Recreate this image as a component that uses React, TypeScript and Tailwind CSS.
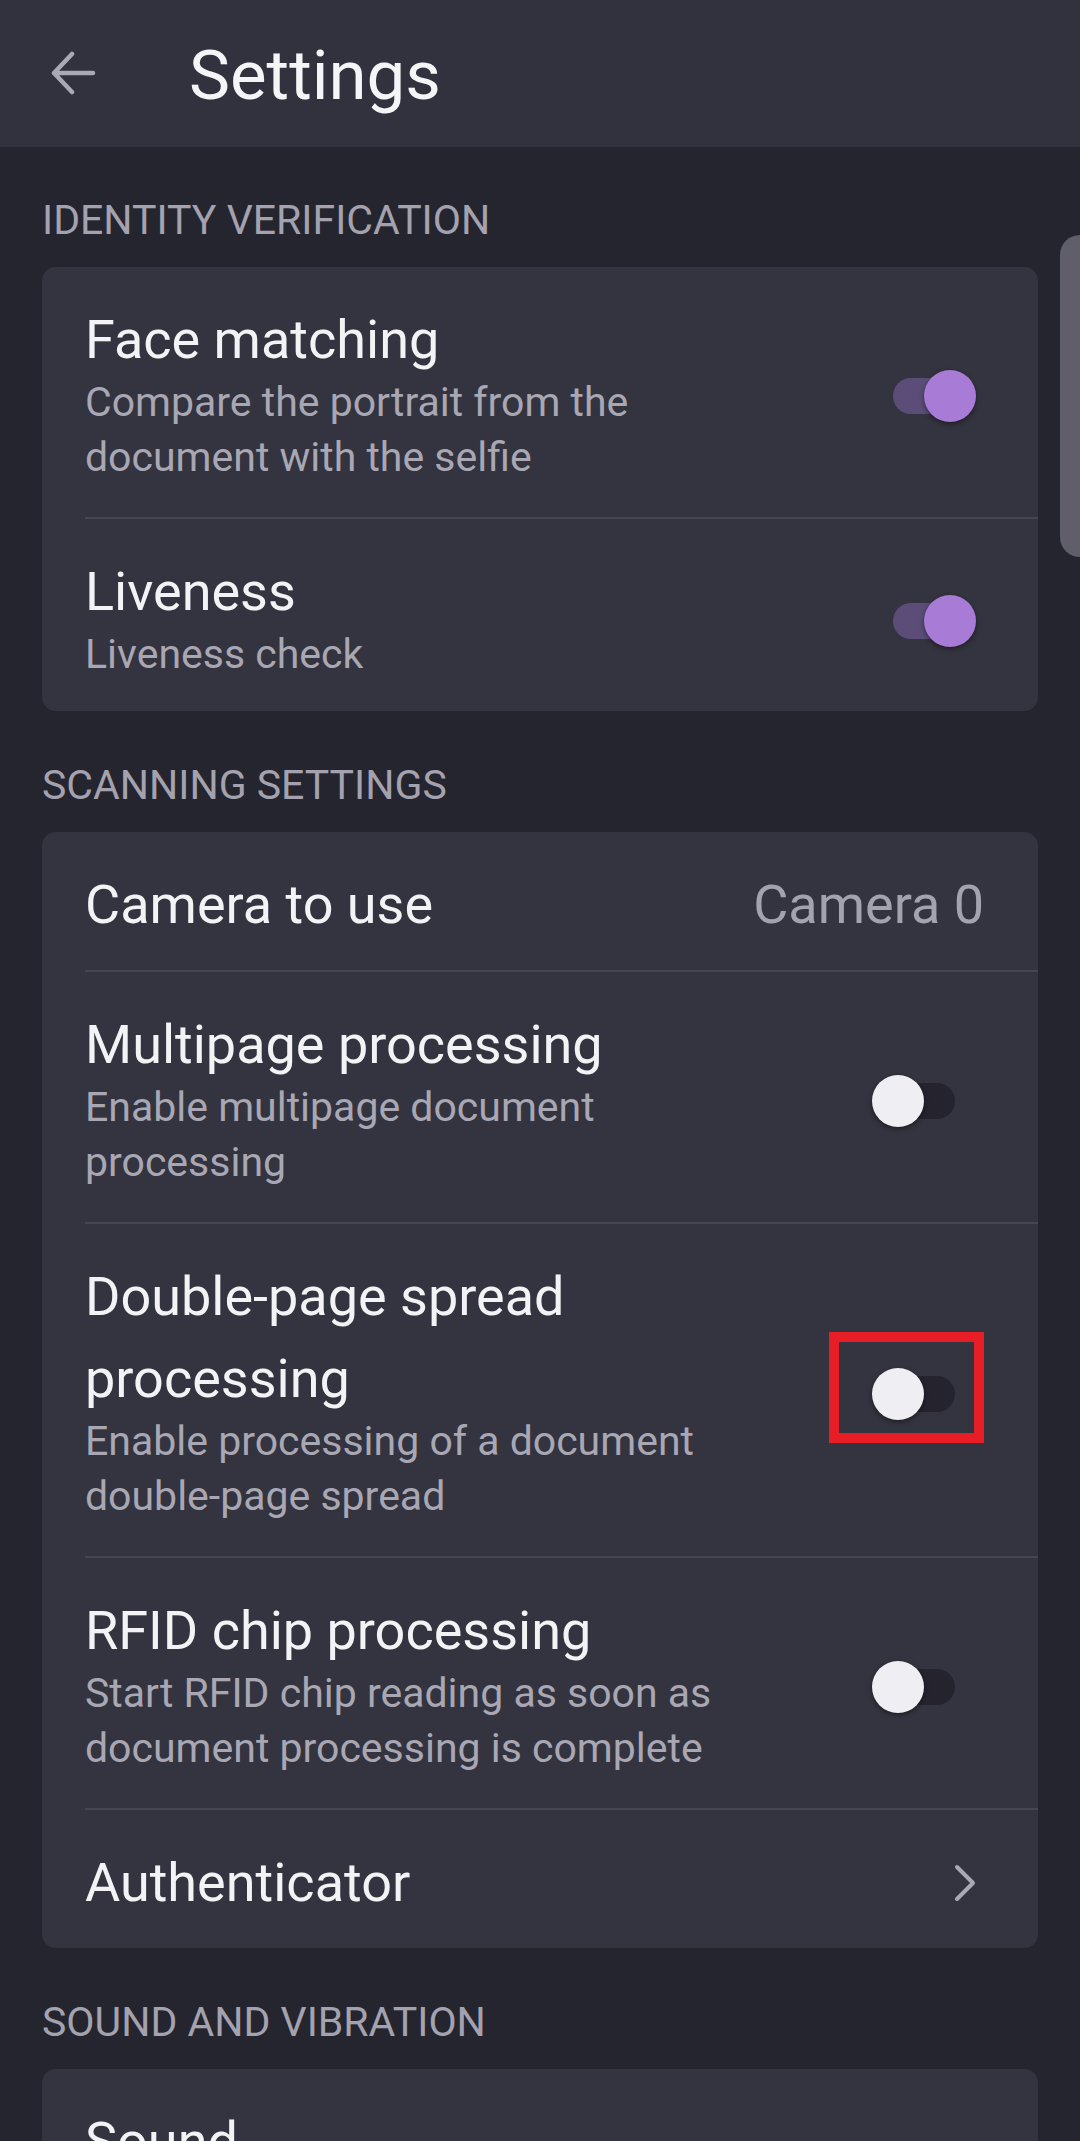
import type { ReactNode } from 'react';

type RowProps = {
  title: ReactNode;
  subtitle?: ReactNode;
  right?: ReactNode;
  divider?: boolean;
  compact?: boolean;
};

function Toggle({ on, marked }: { on: boolean; marked?: boolean }) {
  return (
    <div className="relative h-[52px] w-[104px] shrink-0">
      <div
        className={`absolute left-[21px] top-[8px] h-[36px] w-[62px] rounded-full ${
          on ? 'bg-[#5b4d78]' : 'bg-[#25242e]'
        }`}
      />
      <div
        className={`absolute top-0 h-[52px] w-[52px] rounded-full shadow-[0_2px_5px_rgba(0,0,0,0.45)] ${
          on ? 'right-0 bg-[#a77bd6]' : 'left-0 bg-[#efeff3]'
        }`}
      />
      {marked && (
        <div className="absolute left-[-43px] top-[-36px] h-[111px] w-[155px] border-[10px] border-[#e81e26]" />
      )}
    </div>
  );
}

function Chevron() {
  return (
    <svg width="26" height="40" viewBox="0 0 26 40" fill="none" className="mr-[-2px]">
      <path d="M5 4 L21 20 L5 36" stroke="#a9a8b4" strokeWidth="4" strokeLinecap="round" strokeLinejoin="round" />
    </svg>
  );
}

function Row({ title, subtitle, right, divider, compact }: RowProps) {
  return (
    <div className="pl-[43px]">
      <div
        className={`flex items-center pr-[62px] pt-[40px] ${compact ? 'pb-[29px]' : 'pb-[32px]'} ${
          divider ? 'border-t-2 border-[#464652]' : ''
        }`}
      >
        <div className="min-w-0 max-w-[680px] flex-1">
          <div className="-my-[8px] text-[54px] leading-[82px] text-[#f3f3f6]">{title}</div>
          {subtitle && (
            <div className="mt-[2px] text-[41px] leading-[55px] text-[#a8a7b3]">{subtitle}</div>
          )}
        </div>
        <div className="ml-auto flex items-center">{right}</div>
      </div>
    </div>
  );
}

function Section({ label, first, children }: { label: string; first?: boolean; children: ReactNode }) {
  return (
    <div className={first ? 'pt-[49px]' : 'pt-[50px]'}>
      <div className="mb-[23px] text-[41px] leading-[48px] text-[#a3a2ae] uppercase">{label}</div>
      <div className="overflow-hidden rounded-[14px] bg-[#33343f]">{children}</div>
    </div>
  );
}

export default function App() {
  return (
    <div className="relative h-[2141px] overflow-hidden bg-[#25252f] font-[Roboto,sans-serif]">
      <header className="flex h-[147px] items-center bg-[#31323e] pl-[50px]">
        <svg width="48" height="46" viewBox="0 0 48 46" fill="none">
          <path
            d="M4 22 H43 M22 3 L4 22 L22 41"
            stroke="#a9a8b4"
            strokeWidth="4.5"
            strokeLinecap="round"
            strokeLinejoin="round"
          />
        </svg>
        <h1 className="ml-[91px] pt-[5px] text-[69px] leading-[82px] text-[#f5f5f7]">Settings</h1>
      </header>

      <main className="px-[42px]">
        <Section label="Identity verification" first>
          <Row
            title="Face matching"
            subtitle="Compare the portrait from the document with the selfie"
            right={<Toggle on />}
          />
          <Row divider compact title="Liveness" subtitle="Liveness check" right={<Toggle on />} />
        </Section>

        <Section label="Scanning settings">
          <Row
            title="Camera to use"
            right={<span className="-mr-[8px] text-[54px] leading-[66px] text-[#a3a2ae]">Camera 0</span>}
          />
          <Row
            divider
            title="Multipage processing"
            subtitle="Enable multipage document processing"
            right={<Toggle on={false} />}
          />
          <Row
            divider
            title="Double-page spread processing"
            subtitle="Enable processing of a document double-page spread"
            right={<Toggle on={false} marked />}
          />
          <Row
            divider
            title="RFID chip processing"
            subtitle="Start RFID chip reading as soon as document processing is complete"
            right={<Toggle on={false} />}
          />
          <Row divider title="Authenticator" right={<Chevron />} />
        </Section>

        <Section label="Sound and vibration">
          <Row title="Sound" />
        </Section>
      </main>

      <div className="absolute right-[-20px] top-[235px] h-[322px] w-[40px] rounded-[20px] bg-[#5f5e6a]" />
    </div>
  );
}
